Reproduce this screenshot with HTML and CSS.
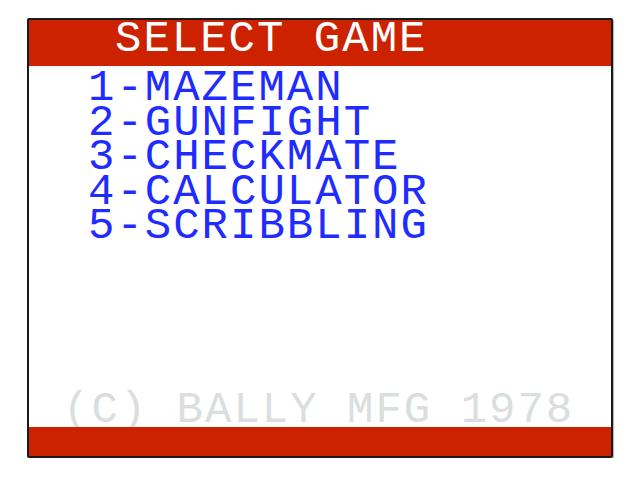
FILE: index.html
```html
<!DOCTYPE html>
<html lang="en">
<head>
    <meta charset="UTF-8">
    <meta name="viewport" content="width=device-width, initial-scale=1.0">
    <title>Select Game</title>
    <link rel="stylesheet" href="styles.css">
</head>
<body>
    <div class="screen">
        <div class="title-bar">SELECT GAME</div>

        <ul class="game-list">
            <li>1-MAZEMAN</li>
            <li>2-GUNFIGHT</li>
            <li>3-CHECKMATE</li>
            <li>4-CALCULATOR</li>
            <li>5-SCRIBBLING</li>
        </ul>

        <div class="copyright">(C) BALLY MFG 1978</div>
        <div class="bottom-bar"></div>
    </div>
</body>
</html>
```

FILE: styles.css
```css
body {
    margin: 0;
    background-color: #ffffff;
    font-family: 'Liberation Mono', 'DejaVu Sans Mono', monospace;
}

.screen {
    box-sizing: border-box;
    width: 586px;
    height: 440px;
    margin: 18px 0 0 27px;
    border: 2px solid #1a1a1a;
    border-radius: 2px;
    box-shadow: 1px 1px 1px rgba(0, 0, 0, 0.3);
    display: flex;
    flex-direction: column;
    font-size: 44px;
    letter-spacing: 2px;
}

.title-bar {
    background-color: #cc2200;
    color: #ffffff;
    height: 46px;
    line-height: 38px;
    padding-left: 86px;
}

.game-list {
    list-style: none;
    margin: 0;
    padding: 5px 0 0 59px;
    color: #1f2cff;
    line-height: 34.5px;
}

.copyright {
    margin-top: auto;
    padding-left: 34px;
    color: #dadede;
    line-height: 34px;
}

.bottom-bar {
    height: 29px;
    background-color: #cc2200;
}
```
